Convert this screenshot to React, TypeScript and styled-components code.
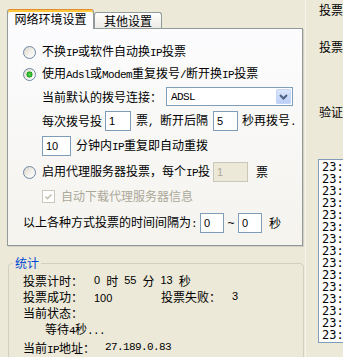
import styled, { createGlobalStyle } from "styled-components";

const GlobalStyle = createGlobalStyle`
  html, body {
    margin: 0;
    padding: 0;
  }
  body {
    background: #ece9d8;
    font-family: "Noto Sans CJK SC", sans-serif;
    font-size: 12px;
    color: #000;
  }
`;

const logLines = [
  "23:39:52 投票成功",
  "23:39:31 投票成功",
  "23:38:57 投票成功",
  "23:38:20 投票成功",
  "23:37:46 投票成功",
  "23:37:09 投票成功",
  "23:36:33 投票成功",
  "23:35:58 投票成功",
  "23:35:21 投票成功",
  "23:34:47 投票成功",
  "23:30:12 投票成功",
  "23:29:38 投票成功",
  "23:29:01 投票成功",
  "23:28:25 投票成功",
  "23:27:50 投票成功",
];

export default function App() {
  return (
    <>
      <GlobalStyle />
      <Window>
        <LeftPane>
          <TabStrip>
            <Tab $active $w={87}>网络环境设置</Tab>
            <Tab $w={68}>其他设置</Tab>
          </TabStrip>

          <Panel>
            <Row $mt={13}>
              <Radio />
              <Label $gap={6}>
                不换<Ascii>IP</Ascii>或软件自动换<Ascii>IP</Ascii>投票
              </Label>
            </Row>
            <Row $mt={2}>
              <Radio $checked />
              <Label $gap={6}>
                使用<Ascii>Adsl</Ascii>或<Ascii>Modem</Ascii>重复拨号<Ascii>/</Ascii>断开换<Ascii>IP</Ascii>投票
              </Label>
            </Row>
            <Row $mt={3} $h={19} $indent={19}>
              <Label>当前默认的拨号连接：</Label>
              <Select>
                <SelectText>ADSL</SelectText>
                <DropButton>
                  <svg width="15" height="15" viewBox="0 0 15 15">
                    <polyline
                      points="4,6 7.5,9.5 11,6"
                      fill="none"
                      stroke="#4d6185"
                      strokeWidth="2"
                    />
                  </svg>
                </DropButton>
              </Select>
            </Row>
            <Row $mt={5} $indent={19}>
              <Label>每次拨号投</Label>
              <Field $w={26} $ml={3}>1</Field>
              <Label $gap={5}>
                票<Ascii>, </Ascii>断开后隔
              </Label>
              <Field $w={25} $ml={5}>5</Field>
              <Label $gap={4}>
                秒再拨号<Ascii>.</Ascii>
              </Label>
            </Row>
            <Row $mt={5} $indent={19}>
              <Field $w={29}>10</Field>
              <Label $gap={5}>
                分钟内<Ascii>IP</Ascii>重复即自动重拨
              </Label>
            </Row>
            <Row $mt={6}>
              <Radio />
              <Label $gap={6}>
                启用代理服务器投票，每个<Ascii>IP</Ascii>投
              </Label>
              <Field $w={35} $ml={3} $disabled>
                1
              </Field>
              <Label $gap={8}>票</Label>
            </Row>
            <Row $mt={4} $indent={19}>
              <CheckBox>
                <svg width="11" height="11" viewBox="0 0 11 11">
                  <polyline
                    points="2.5,5.5 4.5,7.5 8.5,3.5"
                    fill="none"
                    stroke="#c2c0b0"
                    strokeWidth="1.6"
                  />
                </svg>
              </CheckBox>
              <Label $gap={6} $muted>
                自动下载代理服务器信息
              </Label>
            </Row>
            <Row $mt={7}>
              <Label>
                以上各种方式投票的时间间隔为<Ascii>:</Ascii>
              </Label>
              <Field $w={24} $ml={3}>0</Field>
              <Tilde>~</Tilde>
              <Field $w={24}>0</Field>
              <Label $gap={7}>秒</Label>
            </Row>
          </Panel>

          <Group>
            <Legend>统计</Legend>
            <StatRow>
              <StatLabel>投票计时：</StatLabel>
              <TimeRun>
                <Num>0</Num>
                <span>时</span>
                <Num>55</Num>
                <span>分</span>
                <Num>13</Num>
                <span>秒</span>
              </TimeRun>
            </StatRow>
            <StatRow>
              <StatLabel>投票成功：</StatLabel>
              <StatValue>
                <Num>100</Num>
              </StatValue>
              <StatLabel>投票失败：</StatLabel>
              <Num>3</Num>
            </StatRow>
            <StatRow>
              <span>当前状态：</span>
            </StatRow>
            <StatRow $indent={22}>
              <span>
                等待<Ascii>4</Ascii>秒<Ascii>...</Ascii>
              </span>
            </StatRow>
            <StatRow $mt={3}>
              <IpLabel>
                当前<Ascii>IP</Ascii>地址：
              </IpLabel>
              <Ascii>27.189.0.83</Ascii>
            </StatRow>
          </Group>
        </LeftPane>

        <RightPane>
          <SideLabel $mt={2}>投票</SideLabel>
          <SideLabel $mt={21}>投票</SideLabel>
          <SideLabel $mt={49}>验证</SideLabel>
          <LogBox>
            {logLines.map((line, i) => (
              <LogLine key={i}>{line}</LogLine>
            ))}
          </LogBox>
        </RightPane>
      </Window>
    </>
  );
}

const Window = styled.div`
  display: flex;
  width: 343px;
  height: 357px;
  overflow: hidden;
  background: #ece9d8;
`;

const LeftPane = styled.div`
  flex: 0 0 306px;
  box-sizing: border-box;
  padding: 9px 0 0 7px;
  border-right: 1px solid #f5f3ea;
`;

const TabStrip = styled.div`
  position: relative;
  z-index: 1;
  display: flex;
  align-items: flex-end;
  height: 19px;
`;

const Tab = styled.div<{ $active?: boolean; $w: number }>`
  box-sizing: border-box;
  display: flex;
  align-items: center;
  justify-content: center;
  width: ${(p) => p.$w}px;
  height: ${(p) => (p.$active ? 20 : 16)}px;
  margin-bottom: ${(p) => (p.$active ? -1 : 0)}px;
  padding-bottom: ${(p) => (p.$active ? 2 : 0)}px;
  border: 1px solid #919b9c;
  border-bottom: none;
  border-top-color: ${(p) => (p.$active ? "#e68b2c" : "#919b9c")};
  border-radius: 3px 3px 0 0;
  box-shadow: ${(p) => (p.$active ? "inset 0 2px 0 #ffc83c" : "none")};
  background: ${(p) =>
    p.$active ? "#fcfcfe" : "linear-gradient(#ffffff, #ecebe6)"};
  line-height: 14px;
  white-space: nowrap;
`;

const Panel = styled.div`
  box-sizing: border-box;
  width: 296px;
  height: 218px;
  padding: 0 0 0 15px;
  border: 1px solid #919b9c;
  background: linear-gradient(#fcfcfe, #f4f3ee);
  box-shadow: 1px 1px 0 #d3d0c2;
  overflow: hidden;
`;

const Row = styled.div<{ $mt: number; $h?: number; $indent?: number }>`
  display: flex;
  align-items: center;
  height: ${(p) => p.$h ?? 20}px;
  margin-top: ${(p) => p.$mt}px;
  padding-left: ${(p) => p.$indent ?? 0}px;
  white-space: nowrap;
`;

const Label = styled.span<{ $gap?: number; $muted?: boolean }>`
  margin-left: ${(p) => p.$gap ?? 0}px;
  line-height: 16px;
  color: ${(p) => (p.$muted ? "#aca899" : "#000")};
`;

const Ascii = styled.span`
  font-family: "Liberation Mono", monospace;
  font-size: 11px;
  letter-spacing: -0.6px;
`;

const Num = styled.span`
  font-family: "Liberation Sans", "DejaVu Sans", sans-serif;
  font-size: 11px;
`;

const Radio = styled.span<{ $checked?: boolean }>`
  flex: 0 0 13px;
  box-sizing: border-box;
  width: 13px;
  height: 13px;
  border: 1px solid #6f87a5;
  border-radius: 50%;
  background: ${(p) =>
      p.$checked
        ? "radial-gradient(circle at 50% 50%, #6fdc6f 0, #2eb82e 1.6px, #21a121 2.8px, transparent 3.3px),"
        : ""}
    linear-gradient(135deg, #d9d6cb 0%, #f3f2ec 55%, #ffffff 100%);
`;

const CheckBox = styled.span`
  display: flex;
  align-items: center;
  justify-content: center;
  flex: 0 0 13px;
  box-sizing: border-box;
  width: 13px;
  height: 13px;
  border: 1px solid #cac8bb;
  background: #ffffff;
`;

const Field = styled.div<{ $w: number; $ml?: number; $disabled?: boolean }>`
  box-sizing: border-box;
  width: ${(p) => p.$w}px;
  height: 20px;
  margin-left: ${(p) => p.$ml ?? 0}px;
  padding-left: 3px;
  border: 1px solid ${(p) => (p.$disabled ? "#c9c7ba" : "#7f9db9")};
  background: ${(p) => (p.$disabled ? "#ece9d8" : "#ffffff")};
  color: ${(p) => (p.$disabled ? "#aca899" : "#000")};
  font-family: "Liberation Sans", "DejaVu Sans", sans-serif;
  font-size: 11px;
  line-height: 18px;
`;

const Tilde = styled.span`
  width: 14px;
  text-align: center;
  font-family: "Liberation Sans", sans-serif;
  font-size: 12px;
`;

const Select = styled.div`
  box-sizing: border-box;
  display: flex;
  align-items: center;
  width: 127px;
  height: 19px;
  margin-left: 4px;
  padding: 1px;
  border: 1px solid #7f9db9;
  background: #ffffff;
`;

const SelectText = styled.span`
  flex: 1;
  padding-left: 3px;
  font-family: "Liberation Mono", monospace;
  font-size: 11px;
  letter-spacing: -0.6px;
`;

const DropButton = styled.span`
  display: flex;
  width: 15px;
  height: 15px;
  border-radius: 2px;
  background: linear-gradient(#dce7fc, #b9cdf6);
  box-shadow: inset 0 0 0 1px #c7d6f8;
`;

const Group = styled.div`
  position: relative;
  box-sizing: border-box;
  width: 296px;
  height: 120px;
  margin: 17px 0 0 1px;
  padding: 8px 0 0 14px;
  border: 1px solid #d0d0bf;
  border-radius: 4px;
`;

const Legend = styled.span`
  position: absolute;
  top: -9px;
  left: 4px;
  padding: 0 2px;
  background: #ece9d8;
  color: #0046d5;
  line-height: 16px;
`;

const StatRow = styled.div<{ $mt?: number; $indent?: number }>`
  display: flex;
  align-items: center;
  height: 16px;
  margin-top: ${(p) => p.$mt ?? 0}px;
  padding-left: ${(p) => p.$indent ?? 0}px;
  white-space: nowrap;
`;

const StatLabel = styled.span`
  flex: 0 0 71px;
`;

const StatValue = styled.span`
  flex: 0 0 67px;
`;

const TimeRun = styled.span`
  display: flex;
  align-items: center;
  gap: 6px;
`;

const IpLabel = styled.span`
  flex: 0 0 82px;
`;

const RightPane = styled.div`
  flex: 1;
  display: flex;
  flex-direction: column;
  min-width: 0;
  padding-left: 12px;
`;

const SideLabel = styled.span<{ $mt: number }>`
  margin-top: ${(p) => p.$mt}px;
  padding-left: 1px;
  line-height: 16px;
  white-space: nowrap;
`;

const LogBox = styled.div`
  box-sizing: border-box;
  width: 90px;
  height: 184px;
  margin-top: 39px;
  padding: 1px 0 0 3px;
  border: 1px solid #7f9db9;
  background: #ffffff;
  overflow: hidden;
`;

const LogLine = styled.div`
  font-family: "DejaVu Sans Mono", monospace;
  font-size: 12px;
  line-height: 12px;
  white-space: nowrap;
`;
